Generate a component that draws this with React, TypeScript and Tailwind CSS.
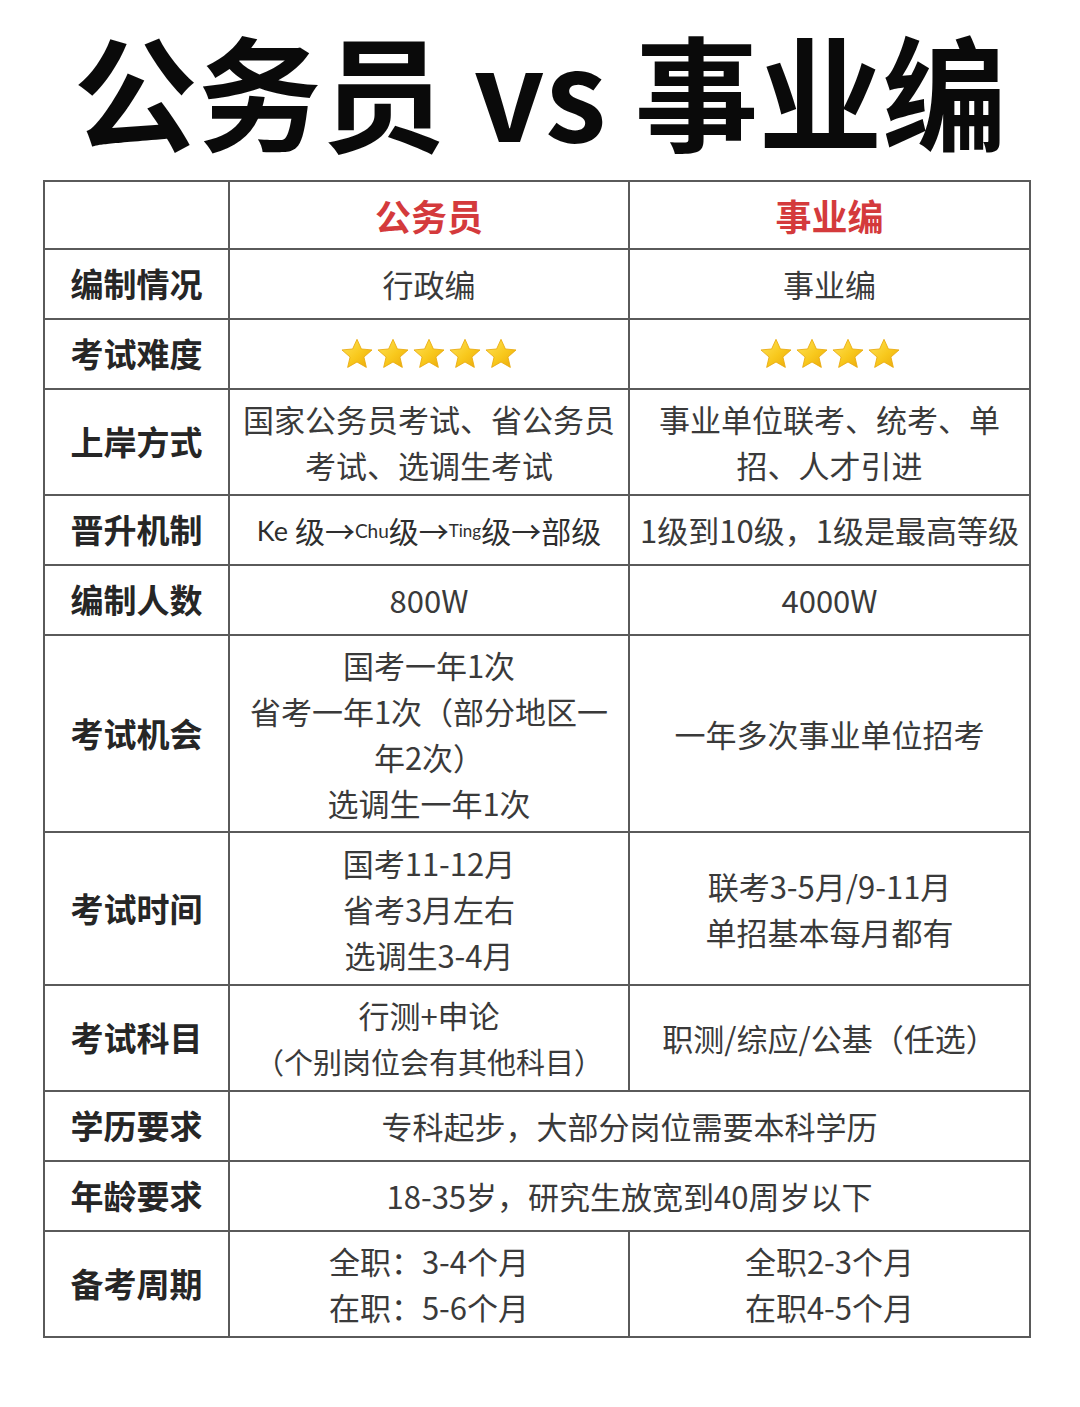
import React from "react";

const CJK = { fontFamily: '"Noto Sans CJK SC", "Noto Sans", sans-serif' };
const LAT = { fontFamily: "Lato, 'Open Sans', sans-serif" };

function Star({ id }: { id: string }) {
  return (
    <svg width="34" height="33" viewBox="0 0 24 23" className="block">
      <defs>
        <linearGradient id={id} x1="0" y1="0" x2="1" y2="1">
          <stop offset="0%" stopColor="#ffe35a" />
          <stop offset="55%" stopColor="#f8c81c" />
          <stop offset="100%" stopColor="#eaa80a" />
        </linearGradient>
      </defs>
      <path
        d="M12 0.8 L15.1 7.6 L22.6 8.3 L16.9 13.3 L18.6 20.6 L12 16.8 L5.4 20.6 L7.1 13.3 L1.4 8.3 L8.9 7.6 Z"
        fill={`url(#${id})`}
        stroke="#e9a90c"
        strokeWidth="0.6"
        strokeLinejoin="round"
      />
    </svg>
  );
}

function Stars({ n, prefix }: { n: number; prefix: string }) {
  return (
    <div className="flex items-center gap-[2px]">
      {Array.from({ length: n }).map((_, i) => (
        <Star key={i} id={`${prefix}${i}`} />
      ))}
    </div>
  );
}

const cell =
  "border-r-2 border-b-2 border-[#5a5a5a] flex flex-col items-center justify-center text-center";
const label = `${cell} text-[33px] font-bold text-[#262626]`;
const body = `${cell} text-[31px] font-normal text-[#3a3a3a] leading-[46px]`;

export default function App() {
  return (
    <div className="w-[1080px] h-[1407px] bg-white" style={CJK}>
      <div className="h-[180px] flex items-center justify-center pb-[4px]">
        <h1 className="text-[124px] font-bold text-[#0a0a0a] leading-none whitespace-nowrap">
          公务员 vs 事业编
        </h1>
      </div>
      <div className="ml-[43px] w-[988px] border-l-2 border-t-2 border-[#5a5a5a] grid grid-cols-[185px_400px_401px] grid-rows-[68px_70px_70px_106px_70px_70px_197px_153px_106px_70px_70px_106px]">
        <div className={cell}></div>
        <div className={`${cell} text-[36px] font-bold text-[#d43a3c]`}>公务员</div>
        <div className={`${cell} text-[36px] font-bold text-[#d43a3c]`}>事业编</div>

        <div className={label}>编制情况</div>
        <div className={body}>行政编</div>
        <div className={body}>事业编</div>

        <div className={label}>考试难度</div>
        <div className={cell}>
          <Stars n={5} prefix="a" />
        </div>
        <div className={cell}>
          <Stars n={4} prefix="b" />
        </div>

        <div className={label}>上岸方式</div>
        <div className={body}>
          <span>国家公务员考试、省公务员</span>
          <span>考试、选调生考试</span>
        </div>
        <div className={body}>
          <span>事业单位联考、统考、单</span>
          <span>招、人才引进</span>
        </div>

        <div className={label}>晋升机制</div>
        <div className={cell}>
          <span className="flex items-center whitespace-nowrap text-[#2e2e2e] leading-none">
            <span className="text-[27px] mr-[7px]" style={LAT}>Ke</span>
            <span className="text-[30px]">级→</span>
            <span className="text-[19px]" style={LAT}>Chu</span>
            <span className="text-[30px]">级→</span>
            <span className="text-[17px]" style={LAT}>Ting</span>
            <span className="text-[30px]">级→部级</span>
          </span>
        </div>
        <div className={`${body} whitespace-nowrap`}>1级到10级，1级是最高等级</div>

        <div className={label}>编制人数</div>
        <div className={body}>800W</div>
        <div className={body}>4000W</div>

        <div className={label}>考试机会</div>
        <div className={`${body} leading-[45px]`}>
          <span>国考一年1次</span>
          <span>省考一年1次（部分地区一</span>
          <span>年2次）</span>
          <span>选调生一年1次</span>
        </div>
        <div className={body}>一年多次事业单位招考</div>

        <div className={label}>考试时间</div>
        <div className={body}>
          <span>国考11-12月</span>
          <span>省考3月左右</span>
          <span>选调生3-4月</span>
        </div>
        <div className={body}>
          <span>联考3-5月/9-11月</span>
          <span>单招基本每月都有</span>
        </div>

        <div className={label}>考试科目</div>
        <div className={body}>
          <span>行测+申论</span>
          <span className="text-[29px]">（个别岗位会有其他科目）</span>
        </div>
        <div className={body}>职测/综应/公基（任选）</div>

        <div className={label}>学历要求</div>
        <div className={`${body} col-span-2`}>专科起步，大部分岗位需要本科学历</div>

        <div className={label}>年龄要求</div>
        <div className={`${body} col-span-2`}>18-35岁，研究生放宽到40周岁以下</div>

        <div className={label}>备考周期</div>
        <div className={body}>
          <span>全职：3-4个月</span>
          <span>在职：5-6个月</span>
        </div>
        <div className={body}>
          <span>全职2-3个月</span>
          <span>在职4-5个月</span>
        </div>
      </div>
    </div>
  );
}
